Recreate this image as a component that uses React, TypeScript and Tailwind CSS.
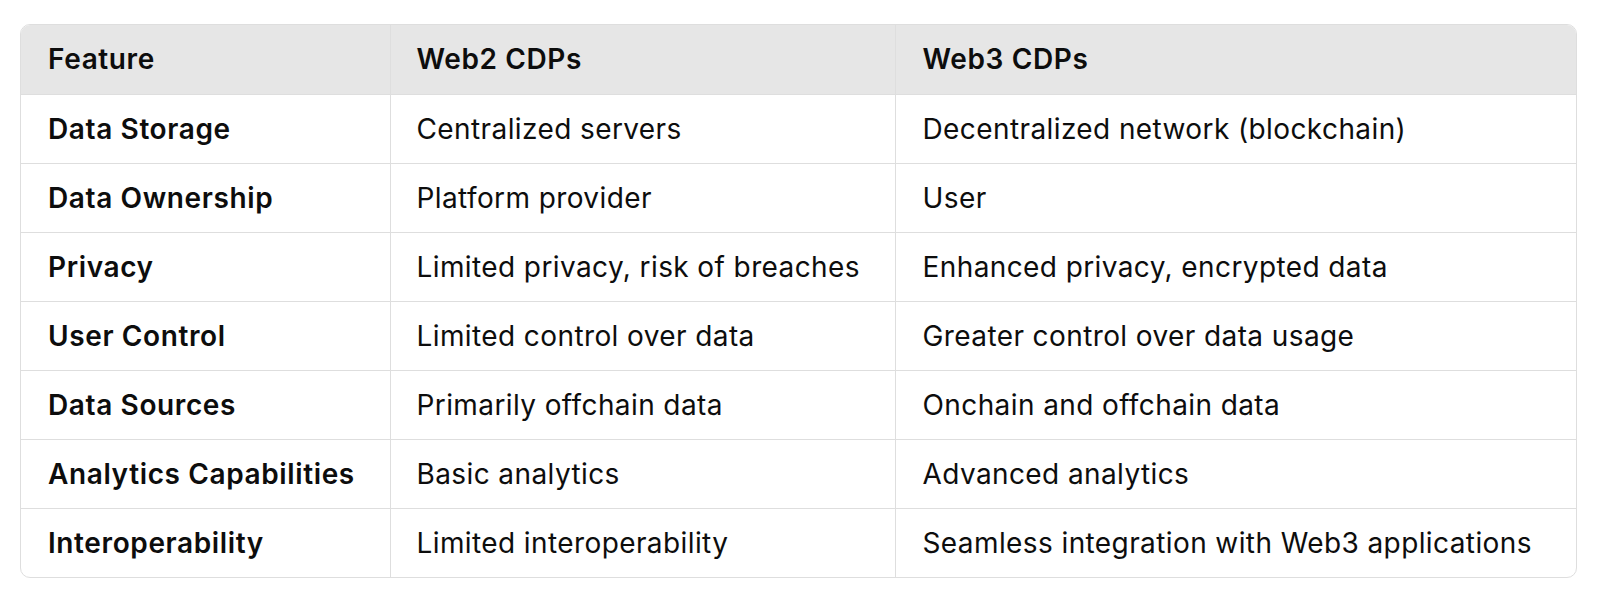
import React from "react";

const rows: [string, string, string][] = [
  ["Data Storage", "Centralized servers", "Decentralized network (blockchain)"],
  ["Data Ownership", "Platform provider", "User"],
  ["Privacy", "Limited privacy, risk of breaches", "Enhanced privacy, encrypted data"],
  ["User Control", "Limited control over data", "Greater control over data usage"],
  ["Data Sources", "Primarily offchain data", "Onchain and offchain data"],
  ["Analytics Capabilities", "Basic analytics", "Advanced analytics"],
  ["Interoperability", "Limited interoperability", "Seamless integration with Web3 applications"],
];

export default function App() {
  return (
    <div
      className="w-[1600px] h-[598px] bg-white pl-[20px] pt-[24px] text-[#0d0d0d]"
      style={{ fontFamily: "Inter, 'Liberation Sans', sans-serif" }}
    >
      <div className="w-[1557px] rounded-[10px] border border-[#dedede] overflow-hidden">
        <table className="w-full table-fixed border-collapse text-[28px] tracking-[0.4px]">
          <colgroup>
            <col className="w-[369px]" />
            <col className="w-[505px]" />
            <col />
          </colgroup>
          <thead>
            <tr className="bg-[#e6e6e6] h-[69px]">
              <th className="text-left font-semibold tracking-[0.62px] px-[27px] border-b border-[#dedede]">Feature</th>
              <th className="text-left font-semibold tracking-[0.62px] px-[26px] border-b border-l border-[#dedede]">Web2 CDPs</th>
              <th className="text-left font-semibold tracking-[0.62px] px-[27px] border-b border-l border-[#dedede]">Web3 CDPs</th>
            </tr>
          </thead>
          <tbody>
            {rows.map((r, i) => (
              <tr key={i} className="h-[69px]">
                <td className={`font-semibold tracking-[0.62px] px-[27px] ${i < rows.length - 1 ? "border-b" : ""} border-[#dedede]`}>{r[0]}</td>
                <td className={`px-[26px] border-l ${i < rows.length - 1 ? "border-b" : ""} border-[#dedede]`}>{r[1]}</td>
                <td className={`px-[27px] border-l ${i < rows.length - 1 ? "border-b" : ""} border-[#dedede]`}>{r[2]}</td>
              </tr>
            ))}
          </tbody>
        </table>
      </div>
    </div>
  );
}
